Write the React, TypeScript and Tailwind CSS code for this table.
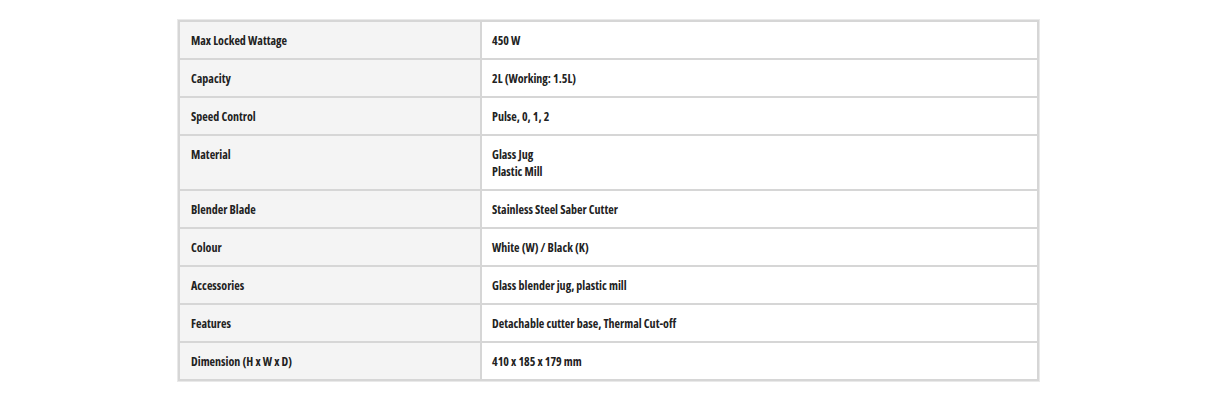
const rows: [string, string[]][] = [
  ["Max Locked Wattage", ["450 W"]],
  ["Capacity", ["2L (Working: 1.5L)"]],
  ["Speed Control", ["Pulse, 0, 1, 2"]],
  ["Material", ["Glass Jug", "Plastic Mill"]],
  ["Blender Blade", ["Stainless Steel Saber Cutter"]],
  ["Colour", ["White (W) / Black (K)"]],
  ["Accessories", ["Glass blender jug, plastic mill"]],
  ["Features", ["Detachable cutter base, Thermal Cut-off"]],
  ["Dimension (H x W x D)", ["410 x 185 x 179 mm"]],
];

export default function App() {
  return (
    <div className="w-[1214px] h-[412px] bg-white pt-[19px] pl-[177px] font-['Open_Sans',sans-serif] [font-stretch:75%] text-[12px] font-bold text-[#222]">
      <div className="w-[863px] border border-[#e9e9e9]">
        <table className="w-full border-collapse border-2 border-[#d6d6d6]">
          <tbody>
            {rows.map(([label, values]) => (
              <tr key={label}>
                <td className="w-[302px] border-2 border-[#d6d6d6] bg-[#f4f4f4] pl-[11px] pt-[10px] pb-[9px] align-top leading-[17px]">
                  {label}
                </td>
                <td className="border-2 border-[#d6d6d6] bg-white pl-[10px] pt-[10px] pb-[9px] align-top leading-[17px]">
                  {values.map((v) => (
                    <div key={v}>{v}</div>
                  ))}
                </td>
              </tr>
            ))}
          </tbody>
        </table>
      </div>
    </div>
  );
}
